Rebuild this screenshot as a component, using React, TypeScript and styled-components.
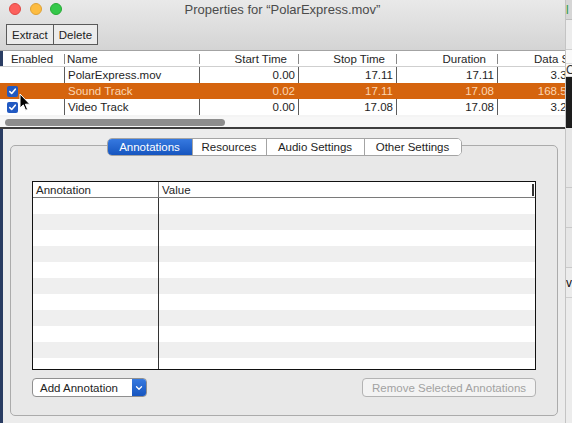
import React from 'react';
import styled, { createGlobalStyle } from 'styled-components';

const GlobalStyle = createGlobalStyle`
* { box-sizing: border-box; }
body {
    margin: 0;
    overflow: hidden;
    background: #2a3b5e;
    font-family: "Liberation Sans", Arial, sans-serif;
}
`

const Screen = styled.div`
display: flex;
width: 572px;
height: 423px;
overflow: hidden;
`

const Window = styled.div`
position: relative;
display: flex;
flex-direction: column;
width: 565px;
height: 423px;
overflow: hidden;
background: #ececec;
`

const Chrome = styled.div`
display: flex;
flex-direction: column;
height: 51px;
background: linear-gradient(#e9e9e9, #d4d4d4);
border-bottom: 1px solid #a3a3a3;
`

const TitleBar = styled.div`
position: relative;
display: flex;
align-items: center;
justify-content: center;
height: 19px;
font-size: 13px;
color: #4b4b4b;
`

const Lights = styled.div`
position: absolute;
left: 9px;
top: 3px;
display: flex;
gap: 8.5px;
`

const Light = styled.span<{ color: string; edge: string }>`
width: 12px;
height: 12px;
border-radius: 50%;
background: ${({ color }) => color};
border: 0.5px solid ${({ edge }) => edge};
`

const Toolbar = styled.div`
display: flex;
padding: 5px 6px 0;
`

const ToolBtn = styled.button`
height: 21px;
padding: 0 5px;
margin: 0;
margin-left: -1px;
background: #ececec;
border: 1px solid #5a5a5a;
font: 11.5px "Liberation Sans", Arial, sans-serif;
color: #222;
&:first-child { margin-left: 0; }
`

const Tracks = styled.div`
position: relative;
background: #fff;
box-shadow: inset 3px 0 0 #2a3d63;
`

const cols = '64px 135px 99px 98px 101px 79px';

const HeadRow = styled.div`
display: grid;
grid-template-columns: ${cols};
height: 16px;
border-bottom: 1px solid #cfcfcf;
`

const HeadCell = styled.div<{ align?: string; first?: boolean; indent?: number }>`
position: relative;
display: flex;
align-items: center;
justify-content: ${({ align }) => align || 'flex-end'};
padding-left: ${({ indent }) => indent || 0}px;
padding-right: ${({ align }) => (align ? '0' : '11px')};
font-size: 11.5px;
color: #262626;
white-space: nowrap;
overflow: hidden;
&::before {
    content: '';
    display: ${({ first }) => (first ? 'none' : 'block')};
    position: absolute;
    left: 0;
    top: 3px;
    bottom: 2px;
    width: 1px;
    background: #8a8a8a;
}
`

const Row = styled.div<{ selected?: boolean; odd?: boolean }>`
display: grid;
grid-template-columns: ${cols};
height: 16px;
background: ${({ selected, odd }) => (selected ? '#d5640e' : odd ? '#f4f4f4' : '#fff')};
color: ${({ selected }) => (selected ? '#fbd6b3' : '#1e1e1e')};
`

const Cell = styled.div<{ right?: boolean; first?: boolean; selected?: boolean }>`
display: flex;
align-items: center;
justify-content: ${({ right }) => (right ? 'flex-end' : 'flex-start')};
padding: ${({ right }) => (right ? '0 3px 0 0' : '0 0 0 3px')};
border-left: ${({ first, selected }) => (first ? 'none' : `1px solid ${selected ? 'transparent' : '#5d5d5d'}`)};
font-size: 11.5px;
white-space: nowrap;
overflow: hidden;
`

const Check = styled.span`
display: flex;
align-items: center;
justify-content: center;
width: 11px;
height: 11px;
margin-left: 4px;
border-radius: 2px;
background: #2159c2;
`

const PartialRow = styled.div`
height: 2px;
background: #f4f4f4;
`

const ScrollTrack = styled.div`
display: flex;
align-items: center;
height: 12px;
padding: 0 5px;
background: #f7f7f7;
border-bottom: 2px solid #3d3d3d;
`

const Thumb = styled.div`
width: 220px;
height: 7px;
border-radius: 4px;
background: #8d8d8d;
`

const Cursor = styled.svg`
position: absolute;
left: 19px;
top: 42px;
`

const Lower = styled.div`
flex: 1;
display: flex;
flex-direction: column;
padding: 16px 7px 0 10px;
background: #ececec;
box-shadow: inset 3px 0 0 #2a3d63;
`

const TabBox = styled.div`
display: flex;
flex-direction: column;
height: 271px;
border: 1px solid #ababab;
border-radius: 5px;
background: #e8e8e8;
`

const Tabs = styled.div`
display: flex;
align-self: center;
margin-top: -8px;
height: 18px;
border: 1px solid #a4a4a4;
border-radius: 5px;
background: #fff;
overflow: hidden;
`

const Tab = styled.div<{ active?: boolean; w: number }>`
display: flex;
align-items: center;
justify-content: center;
width: ${({ w }) => w}px;
font-size: 11.5px;
color: ${({ active }) => (active ? '#fff' : '#1e1e1e')};
background: ${({ active }) => (active ? 'linear-gradient(#3679e0, #1655bf)' : '#fff')};
border-left: 1px solid #a4a4a4;
&:first-child { border-left: none; }
`

const Content = styled.div`
display: flex;
flex-direction: column;
padding: 25px 21px 0;
`

const AnnTable = styled.div`
display: flex;
flex-direction: column;
height: 189px;
border: 1px solid #111;
background: #fff;
overflow: hidden;
`

const annCols = '125px 1fr';

const AnnHead = styled.div`
position: relative;
display: grid;
grid-template-columns: ${annCols};
flex: 0 0 16px;
border-bottom: 1px solid #7a7a7a;
`

const AnnHeadCell = styled.div<{ first?: boolean }>`
display: flex;
align-items: center;
padding-left: 3px;
font-size: 11.5px;
color: #262626;
border-left: ${({ first }) => (first ? 'none' : '1px solid #666')};
`

const ResizeMark = styled.span`
position: absolute;
right: 1px;
top: 2px;
width: 2px;
height: 12px;
background: #333;
`

const AnnRow = styled.div<{ odd?: boolean }>`
display: grid;
grid-template-columns: ${annCols};
flex: 0 0 16px;
background: ${({ odd }) => (odd ? '#efefef' : '#fff')};
`

const AnnCell = styled.div<{ first?: boolean }>`
border-left: ${({ first }) => (first ? 'none' : '1px solid #333')};
`

const Actions = styled.div`
display: flex;
justify-content: space-between;
margin-top: 8px;
`

const Popup = styled.div`
display: flex;
align-items: stretch;
width: 115px;
height: 19px;
border: 1px solid #8f8f8f;
border-radius: 4px;
background: #fff;
overflow: hidden;
`

const PopupLabel = styled.span`
flex: 1;
display: flex;
align-items: center;
padding-left: 7px;
font-size: 11.5px;
color: #1e1e1e;
`

const PopupArrow = styled.span`
display: flex;
align-items: center;
justify-content: center;
width: 14px;
background: linear-gradient(#3679e0, #1655bf);
`

const DisabledBtn = styled.div`
display: flex;
align-items: center;
justify-content: center;
width: 174px;
height: 19px;
border: 1px solid #b3b3b3;
border-radius: 4px;
background: #f3f3f3;
font-size: 11.5px;
color: #a2a2a2;
`

const Peek = styled.div`
display: flex;
flex-direction: column;
width: 7px;
height: 423px;
border-left: 1px solid #c4c4c4;
overflow: hidden;
`

const PeekBlock = styled.div<{ h: number; bg: string; color?: string }>`
flex: 0 0 ${({ h }) => h}px;
display: flex;
align-items: center;
background: ${({ bg }) => bg};
color: ${({ color }) => color || '#000'};
font-size: 12px;
line-height: 1;
white-space: nowrap;
border-bottom: 1px solid rgba(0, 0, 0, 0.12);
`

const tracks = [
    { name: 'PolarExpress.mov', start: '0.00', stop: '17.11', dur: '17.11', size: '3.31', check: false },
    { name: 'Sound Track', start: '0.02', stop: '17.11', dur: '17.08', size: '168.53', check: true, selected: true },
    { name: 'Video Track', start: '0.00', stop: '17.08', dur: '17.08', size: '3.21', check: true },
];

const CheckMark = () => (
    <svg width="9" height="9" viewBox="0 0 9 9">
        <path d="M1.8 4.6 L3.7 6.5 L7.3 2.2" fill="none" stroke="#fff" strokeWidth="1.6" strokeLinecap="round" strokeLinejoin="round" />
    </svg>
);

const App = () => {
    const annRows = Array.from({ length: 11 });
    return (
        <Screen>
            <GlobalStyle />
            <Window>
                <Chrome>
                    <TitleBar>
                        <Lights>
                            <Light color="#fc605c" edge="#de4a45" />
                            <Light color="#fdbc40" edge="#dea236" />
                            <Light color="#34c84a" edge="#27aa35" />
                        </Lights>
                        Properties for “PolarExpress.mov”
                    </TitleBar>
                    <Toolbar>
                        <ToolBtn>Extract</ToolBtn>
                        <ToolBtn>Delete</ToolBtn>
                    </Toolbar>
                </Chrome>
                <Tracks>
                    <HeadRow>
                        <HeadCell first align="center">Enabled</HeadCell>
                        <HeadCell align="flex-start" indent={3}>Name</HeadCell>
                        <HeadCell>Start Time</HeadCell>
                        <HeadCell>Stop Time</HeadCell>
                        <HeadCell>Duration</HeadCell>
                        <HeadCell align="flex-start" indent={37}>Data Size</HeadCell>
                    </HeadRow>
                    {tracks.map((t, i) => (
                        <Row key={t.name} selected={t.selected} odd={i % 2 === 1}>
                            <Cell first>{t.check && <Check><CheckMark /></Check>}</Cell>
                            <Cell selected={t.selected}>{t.name}</Cell>
                            <Cell right selected={t.selected}>{t.start}</Cell>
                            <Cell right selected={t.selected}>{t.stop}</Cell>
                            <Cell right selected={t.selected}>{t.dur}</Cell>
                            <Cell right selected={t.selected}>{t.size}</Cell>
                        </Row>
                    ))}
                    <PartialRow />
                    <ScrollTrack>
                        <Thumb />
                    </ScrollTrack>
                    <Cursor width="12" height="19" viewBox="0 0 12 19">
                        <path d="M1 1 L1 15 L4.3 11.9 L6.6 17.3 L8.6 16.4 L6.4 11.2 L10.8 11.2 Z" fill="#000" stroke="#fff" strokeWidth="1" strokeLinejoin="round" />
                    </Cursor>
                </Tracks>
                <Lower>
                    <TabBox>
                        <Tabs>
                            <Tab active w={84}>Annotations</Tab>
                            <Tab w={74}>Resources</Tab>
                            <Tab w={98}>Audio Settings</Tab>
                            <Tab w={97}>Other Settings</Tab>
                        </Tabs>
                        <Content>
                            <AnnTable>
                                <AnnHead>
                                    <AnnHeadCell first>Annotation</AnnHeadCell>
                                    <AnnHeadCell>Value</AnnHeadCell>
                                    <ResizeMark />
                                </AnnHead>
                                {annRows.map((_, i) => (
                                    <AnnRow key={i} odd={i % 2 === 1}>
                                        <AnnCell first />
                                        <AnnCell />
                                    </AnnRow>
                                ))}
                            </AnnTable>
                            <Actions>
                                <Popup>
                                    <PopupLabel>Add Annotation</PopupLabel>
                                    <PopupArrow>
                                        <svg width="8" height="6" viewBox="0 0 8 6">
                                            <path d="M1.5 1.8 L4 4.2 L6.5 1.8" fill="none" stroke="#fff" strokeWidth="1.3" strokeLinecap="round" strokeLinejoin="round" />
                                        </svg>
                                    </PopupArrow>
                                </Popup>
                                <DisabledBtn>Remove Selected Annotations</DisabledBtn>
                            </Actions>
                        </Content>
                    </TabBox>
                </Lower>
            </Window>
            <Peek>
                <PeekBlock h={20} bg="#d6d6d6" color="#2f9a3a">l</PeekBlock>
                <PeekBlock h={30} bg="#ececec" />
                <PeekBlock h={14} bg="#fafafa" />
                <PeekBlock h={10} bg="#fafafa" color="#333">C</PeekBlock>
                <PeekBlock h={51} bg="#1d1d1d" />
                <PeekBlock h={60} bg="#e6e6e6" />
                <PeekBlock h={40} bg="#e6e6e6" />
                <PeekBlock h={40} bg="#e6e6e6" />
                <PeekBlock h={30} bg="#ececec" color="#111">ve</PeekBlock>
                <PeekBlock h={128} bg="#ececec" />
            </Peek>
        </Screen>
    );
};

export default App;
